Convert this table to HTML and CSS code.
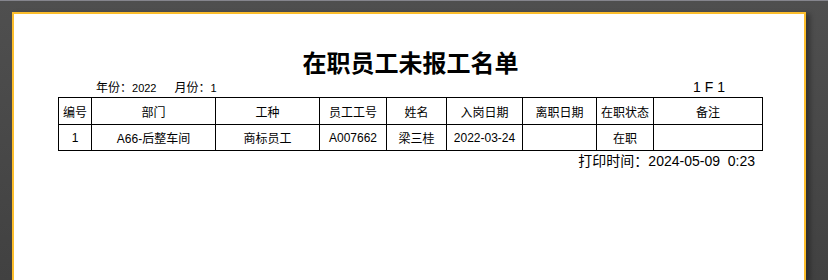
FILE: index.html
```html
<!DOCTYPE html>
<html lang="zh-CN">
<head>
<meta charset="utf-8">
<title>在职员工未报工名单</title>
<link rel="stylesheet" href="styles.css">
</head>
<body>
<div class="viewer">
  <div class="sheet">
    <div class="report">
      <h1 class="report-title">在职员工未报工名单</h1>
      <div class="report-meta">
        <div class="meta-left">
          <span class="meta-item"><span class="meta-label">年份：</span><span class="meta-value">2022</span></span>
          <span class="meta-item"><span class="meta-label">月份：</span><span class="meta-value">1</span></span>
        </div>
        <div class="page-no">1 F 1</div>
      </div>
      <table class="grid">
        <colgroup>
          <col class="c-no"><col class="c-dept"><col class="c-type"><col class="c-id"><col class="c-name">
          <col class="c-in"><col class="c-out"><col class="c-state"><col class="c-note">
        </colgroup>
        <thead>
          <tr>
            <th>编号</th><th>部门</th><th>工种</th><th>员工工号</th><th>姓名</th>
            <th>入岗日期</th><th>离职日期</th><th>在职状态</th><th>备注</th>
          </tr>
        </thead>
        <tbody>
          <tr>
            <td>1</td><td>A66-后整车间</td><td>商标员工</td><td>A007662</td><td>梁三桂</td>
            <td>2022-03-24</td><td></td><td>在职</td><td></td>
          </tr>
        </tbody>
      </table>
      <div class="print-time">打印时间：2024-05-09&nbsp;&nbsp;0:23</div>
    </div>
  </div>
</div>
</body>
</html>
```
FILE: styles.css
```css
html, body {
  margin: 0;
  padding: 0;
  height: 280px;
  overflow: hidden;
}

body {
  font-family: "Liberation Sans", "Noto Sans CJK SC", sans-serif;
  color: #000;
}

.viewer {
  height: 280px;
  box-sizing: border-box;
  border-top: 1px solid #85858d;
  background: linear-gradient(#4f4f4f, #414141);
  padding: 11px 0 0 12px;
  overflow: hidden;
}

/* the sheet runs on below the visible area, so it has no bottom edge */
.sheet {
  width: 794px;
  height: 268px;
  box-sizing: border-box;
  background: #fff;
  border: 2px solid #fbbd2c;
  border-bottom: 0;
  box-shadow: 4px 2px 5px rgba(0, 0, 0, 0.35);
}

.report {
  width: 705px;
  margin-left: 44px;
}

.report-title {
  margin: 36px 0 0;
  font-family: "Noto Sans CJK SC", sans-serif;
  font-size: 24px;
  line-height: 24px;
  font-weight: 700;
  text-align: center;
}

.report-meta {
  margin-top: 6px;
  height: 14px;
  padding: 0 38px;
  display: flex;
  justify-content: space-between;
  align-items: center;
}

.meta-left {
  display: flex;
  gap: 18px;
  font-size: 11px;
  line-height: 14px;
}

.meta-label {
  font-family: "Noto Sans CJK SC", sans-serif;
  font-size: 12px;
}

.page-no {
  font-size: 14px;
  line-height: 14px;
}

.grid {
  margin-top: 3px;
  table-layout: fixed;
  width: 705px;
  border-collapse: separate;
  border-spacing: 1px;
  background: #000;
  font-size: 12px;
}

.grid th,
.grid td {
  background: #fff;
  padding: 0;
  text-align: center;
  font-weight: 400;
  white-space: nowrap;
  overflow: hidden;
}

.grid th {
  height: 26px;
  font-family: "Noto Sans CJK SC", sans-serif;
}

.grid td {
  height: 25px;
}

.c-no { width: 32px; }
.c-dept { width: 123px; }
.c-type { width: 103px; }
.c-id { width: 66px; }
.c-name { width: 59px; }
.c-in { width: 75px; }
.c-out { width: 73px; }
.c-state { width: 56px; }
.c-note { width: 108px; }

.print-time {
  margin-top: 3px;
  padding-right: 8px;
  text-align: right;
  font-size: 14px;
  line-height: 14px;
}
```
